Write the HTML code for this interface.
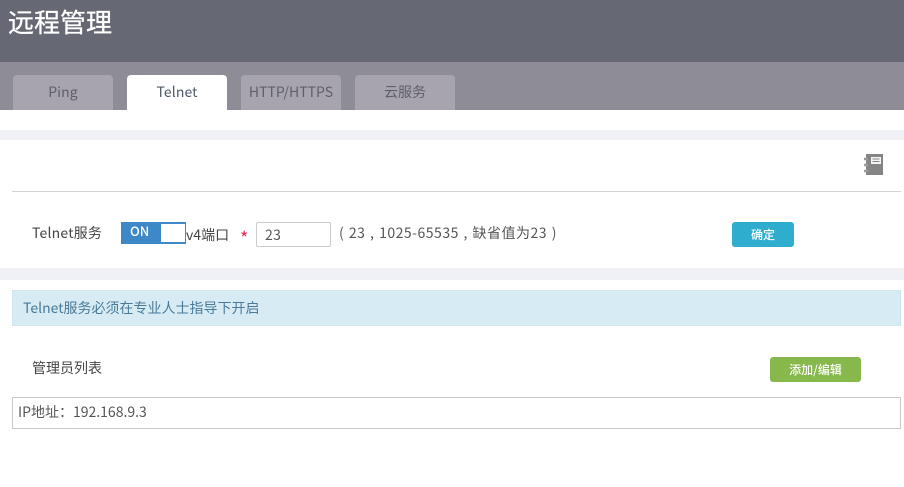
<!DOCTYPE html>
<html lang="zh">
<head>
<meta charset="utf-8">
<style>
html,body{margin:0;padding:0;width:904px;height:487px;overflow:hidden;background:#fff}
body{position:relative;font-family:"Noto Sans CJK SC","Liberation Sans",sans-serif;font-size:14px;color:#555}
.a{position:absolute;white-space:nowrap}
.tab{position:absolute;top:75px;height:35px;line-height:35px;text-align:center;background:#a7a4ae;color:#5f5f6a;border-radius:4px 4px 0 0;font-size:14px}
.lbl{color:#444}
</style>
</head>
<body>
<div class="a" style="left:0;top:0;width:904px;height:62px;background:#666874"></div>
<div class="a" style="left:0;top:62px;width:904px;height:48px;background:#8e8c97"></div>
<div class="a" style="left:8px;top:5px;font-size:26px;line-height:34px;color:#fff;-webkit-text-stroke:.3px #fff">远程管理</div>
<div class="tab" style="left:13px;width:100px;letter-spacing:.1px">Ping</div>
<div class="tab" style="left:127px;width:100px;background:#fff;color:#4e5a68;letter-spacing:.1px">Telnet</div>
<div class="tab" style="left:241px;width:100px">HTTP/HTTPS</div>
<div class="tab" style="left:355px;width:100px">云服务</div>

<div class="a" style="left:0;top:130px;width:904px;height:10px;background:#f0f0f7"></div>

<svg class="a" style="left:863px;top:153px" width="22" height="23" viewBox="0 0 22 23">
<rect x="3" y="1" width="17" height="21" fill="#858585"/>
<rect x="8" y="4" width="10" height="7" fill="#f4f4f4"/>
<path d="M9.500 6h7M9.500 8.500h7" stroke="#858585" stroke-width="1"/>
<path d="M1 6h4M1 12h4M1 18h4" stroke="#9a9a9a" stroke-width="2.500"/>
</svg>
<div class="a" style="left:12px;top:191px;width:889px;height:1px;background:#d4d4d4"></div>

<div class="a lbl" style="left:32px;top:224px;line-height:18px;letter-spacing:.2px">Telnet服务</div>
<div class="a" style="left:121px;top:222px;width:65px;height:22px;background:#3f88c8"></div>
<div class="a" style="left:161px;top:224px;width:24px;height:18px;background:#fff"></div>
<div class="a" style="left:130px;top:222px;font-size:13px;line-height:18px;color:#fff;font-weight:500">ON</div>
<div class="a lbl" style="left:186px;top:226px;line-height:18px">v4端口</div>
<div class="a" style="left:240px;top:229px;line-height:18px;color:#e0294a;font-size:18px">*</div>
<div class="a" style="left:256px;top:222px;width:73px;height:23px;border:1px solid #ccc;border-radius:2px;line-height:24px;text-indent:8px;color:#555;letter-spacing:.3px">23</div>
<div class="a" style="left:339px;top:224px;line-height:18px;letter-spacing:.5px;color:#555;word-spacing:1px">( 23 , 1025-65535 , 缺省值为23 )</div>
<div class="a" style="left:732px;top:222px;width:62px;height:25px;background:#2fadcf;border-radius:3px;color:#fff;text-align:center;line-height:26px;font-size:12px;font-weight:500">确定</div>

<div class="a" style="left:0;top:268px;width:904px;height:12px;background:#f0f0f7"></div>

<div class="a" style="left:12px;top:290px;width:889px;background:#d7ebf4;border:solid #cfe6ee;border-width:1px;box-sizing:border-box;height:36px;line-height:34px;text-indent:10px;color:#4a7a97">Telnet服务必须在专业人士指导下开启</div>

<div class="a lbl" style="left:32px;top:359px;line-height:18px">管理员列表</div>
<div class="a" style="left:770px;top:357px;width:91px;height:25px;background:#86b84c;border-radius:3px;color:#fff;text-align:center;line-height:25px;font-size:12px;font-weight:500">添加/编辑</div>

<div class="a" style="left:12px;top:397px;width:887px;height:30px;border:1px solid #c8c8c8;line-height:29px;text-indent:5px;color:#555">IP地址：192.168.9.3</div>
</body>
</html>
